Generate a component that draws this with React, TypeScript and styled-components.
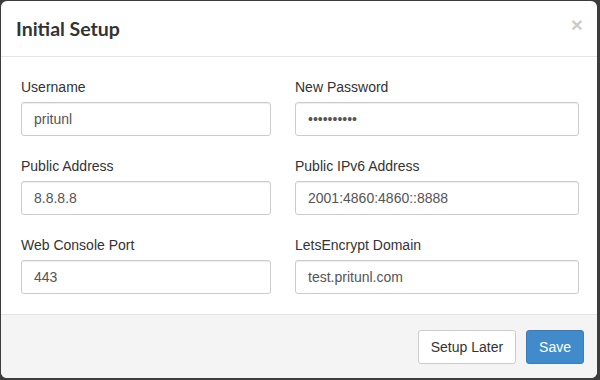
import {FC} from "react";
import styled, {createGlobalStyle} from 'styled-components';

const GlobalStyle = createGlobalStyle`
  html, body {
    margin: 0;
    padding: 0;
    background: #3c3c3c;
  }
  * {
    box-sizing: border-box;
  }
`;

const Backdrop = styled.div`
  width: 600px;
  height: 380px;
  padding: 1px 3px 2px 1px;
  background: #3c3c3c;
  font-family: 'Liberation Sans', Arial, sans-serif;
  font-size: 14px;
  color: #333;
`;

const Modal = styled.div`
  display: flex;
  flex-direction: column;
  height: 100%;
  background: #fff;
  border-radius: 6px;
  overflow: hidden;
`;

const Header = styled.div`
  display: flex;
  align-items: center;
  justify-content: space-between;
  height: 56px;
  padding: 0 14px 0 15px;
  border-bottom: 1px solid #e5e5e5;
`;

const Title = styled.h4`
  margin: 0;
  font-family: 'Lato', sans-serif;
  font-weight: 700;
  font-size: 19.5px;
  color: #333;
`;

const Close = styled.button`
  border: 0;
  padding: 0;
  margin-top: -9px;
  background: transparent;
  font-family: 'Liberation Sans', Arial, sans-serif;
  font-size: 21px;
  font-weight: 700;
  line-height: 1;
  color: #000;
  opacity: 0.2;
`;

const Body = styled.div`
  flex: 1;
  display: grid;
  grid-template-columns: 250px 1fr;
  column-gap: 24px;
  row-gap: 20px;
  align-content: start;
  padding: 20px 18px 0 20px;
`;

const Field = styled.div`
  display: flex;
  flex-direction: column;
`;

const Label = styled.label`
  line-height: 20px;
  margin-bottom: 5px;
  color: #333;
`;

const Input = styled.input`
  height: 34px;
  padding: 6px 12px;
  font-family: 'Liberation Sans', Arial, sans-serif;
  font-size: 14px;
  color: #555;
  background: #fff;
  border: 1px solid #ccc;
  border-radius: 3px;
  box-shadow: inset 0 1px 1px rgba(0, 0, 0, 0.075);
  outline: none;
`;

const Footer = styled.div`
  display: flex;
  justify-content: flex-end;
  gap: 10px;
  height: 64px;
  padding: 15px 13px 15px 15px;
  background: #f4f4f4;
  border-top: 1px solid #e5e5e5;
`;

const Button = styled.button<{$primary?: boolean}>`
  height: 34px;
  padding: 6px 12px;
  font-family: 'Liberation Sans', Arial, sans-serif;
  font-size: 14px;
  line-height: 20px;
  border-radius: 3px;
  border: 1px solid ${p => p.$primary ? '#3a7dbd' : '#ccc'};
  background: ${p => p.$primary ? '#428bca' : '#fff'};
  color: ${p => p.$primary ? '#fff' : '#333'};
`;

const fields = [
    {label: 'Username', value: 'pritunl', type: 'text'},
    {label: 'New Password', value: 'xxxxxxxxxx', type: 'password'},
    {label: 'Public Address', value: '8.8.8.8', type: 'text'},
    {label: 'Public IPv6 Address', value: '2001:4860:4860::8888', type: 'text'},
    {label: 'Web Console Port', value: '443', type: 'text'},
    {label: 'LetsEncrypt Domain', value: 'test.pritunl.com', type: 'text'},
];

const App: FC = () => {
    return (
        <Backdrop>
            <GlobalStyle/>
            <Modal>
                <Header>
                    <Title>Initial Setup</Title>
                    <Close type="button">×</Close>
                </Header>

                <Body>
                    {fields.map(f => (
                        <Field key={f.label}>
                            <Label>{f.label}</Label>
                            <Input type={f.type} defaultValue={f.value} readOnly/>
                        </Field>
                    ))}
                </Body>

                <Footer>
                    <Button type="button">Setup Later</Button>
                    <Button type="button" $primary>Save</Button>
                </Footer>
            </Modal>
        </Backdrop>
    )
}

export default App;
